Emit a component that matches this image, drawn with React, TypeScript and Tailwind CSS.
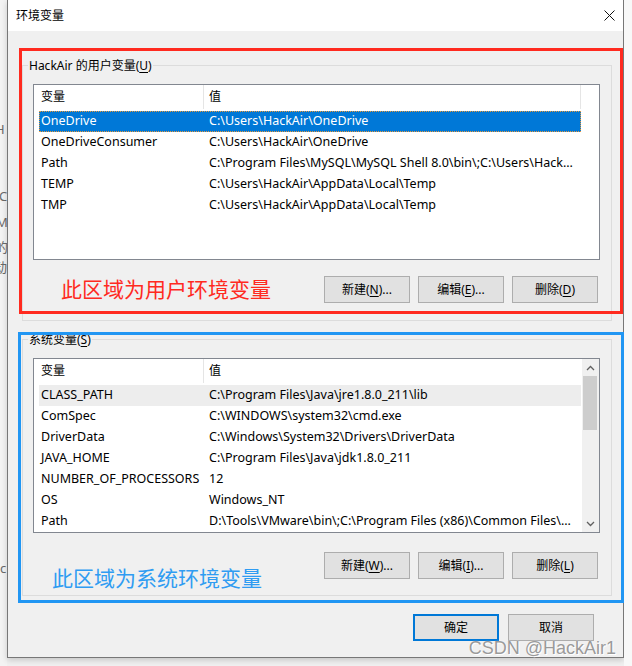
import React from "react";

type Row = { name: string; value: string };

const userRows: Row[] = [
  { name: "OneDrive", value: "C:\\Users\\HackAir\\OneDrive" },
  { name: "OneDriveConsumer", value: "C:\\Users\\HackAir\\OneDrive" },
  { name: "Path", value: "C:\\Program Files\\MySQL\\MySQL Shell 8.0\\bin\\;C:\\Users\\Hack..." },
  { name: "TEMP", value: "C:\\Users\\HackAir\\AppData\\Local\\Temp" },
  { name: "TMP", value: "C:\\Users\\HackAir\\AppData\\Local\\Temp" },
];

const sysRows: Row[] = [
  { name: "CLASS_PATH", value: "C:\\Program Files\\Java\\jre1.8.0_211\\lib" },
  { name: "ComSpec", value: "C:\\WINDOWS\\system32\\cmd.exe" },
  { name: "DriverData", value: "C:\\Windows\\System32\\Drivers\\DriverData" },
  { name: "JAVA_HOME", value: "C:\\Program Files\\Java\\jdk1.8.0_211" },
  { name: "NUMBER_OF_PROCESSORS", value: "12" },
  { name: "OS", value: "Windows_NT" },
  { name: "Path", value: "D:\\Tools\\VMware\\bin\\;C:\\Program Files (x86)\\Common Files\\..." },
];

function U({ children }: { children: React.ReactNode }) {
  return <span className="underline underline-offset-[2px] decoration-1">{children}</span>;
}

function Btn({ children, primary }: { children: React.ReactNode; primary?: boolean }) {
  return (
    <div
      className={
        primary
          ? "w-[86px] h-[27px] flex items-center justify-center bg-[#e1e1e1] border-2 border-[#0078d7] text-[12px] text-black"
          : "w-[86px] h-[27px] flex items-center justify-center bg-[#e1e1e1] border border-[#adadad] text-[12px] text-black"
      }
    >
      {children}
    </div>
  );
}

function Chevron({ up }: { up?: boolean }) {
  return (
    <svg width="9" height="6" viewBox="0 0 9 6">
      <path
        d={up ? "M1 5 L4.5 1.5 L8 5" : "M1 1 L4.5 4.5 L8 1"}
        fill="none"
        stroke="#606060"
        strokeWidth="1.3"
      />
    </svg>
  );
}

function ListBox({
  rows,
  selected,
  hover,
  scroll,
  height,
}: {
  rows: Row[];
  selected?: number;
  hover?: number;
  scroll?: boolean;
  height: string;
}) {
  return (
    <div className={`ml-[10px] w-[567px] ${height} border border-[#828790] bg-white flex`}>
      <div className="flex-1 pl-[5px] flex flex-col overflow-hidden">
        <div className="h-[24px] mb-[2px] flex text-[12px] text-black">
          <div className="w-[165px] shrink-0 pl-[2px] border-r border-[#e5e5e5] flex items-center">变量</div>
          <div
            className={
              scroll
                ? "w-[377px] shrink-0 pl-[5px] flex items-center"
                : "w-[377px] shrink-0 pl-[5px] border-r border-[#e5e5e5] flex items-center"
            }
          >
            值
          </div>
        </div>
        {rows.map((r, i) => {
          const sel = i === selected;
          const hov = i === hover;
          const cls = sel
            ? "w-[542px] h-[21px] shrink-0 flex text-[12.5px] bg-[#0078d7] text-white outline-1 outline-dotted outline-offset-[-1px] outline-[#e8993b]"
            : hov
            ? "w-[542px] h-[21px] shrink-0 flex text-[12.5px] bg-[#ededed] text-black"
            : "w-[542px] h-[21px] shrink-0 flex text-[12.5px] text-black";
          return (
            <div key={i} className={cls}>
              <div className="w-[165px] shrink-0 pl-[2px] flex items-center whitespace-nowrap overflow-hidden">{r.name}</div>
              <div className="w-[377px] shrink-0 pl-[5px] flex items-center whitespace-nowrap overflow-hidden">{r.value}</div>
            </div>
          );
        })}
      </div>
      {scroll && (
        <div className="w-[17px] shrink-0 bg-[#f0f0f0] flex flex-col">
          <div className="h-[17px] flex items-center justify-center">
            <Chevron up />
          </div>
          <div className="ml-[1px] w-[14px] h-[54px] bg-[#cdcdcd]" />
          <div className="flex-1" />
          <div className="h-[17px] flex items-center justify-center">
            <Chevron />
          </div>
        </div>
      )}
    </div>
  );
}

export default function App() {
  return (
    <div className="relative w-[632px] h-[666px] overflow-hidden bg-[#f0f0f0] flex font-['Noto_Sans','Noto_Sans_CJK_SC',sans-serif]">
      {/* background window fragments at left */}
      <div className="w-[7px] shrink-0 flex flex-col overflow-hidden text-[13px] leading-[13px] text-[#6a6a6a] bg-[#f3f3f3]">
        <div className="mt-[123px] -ml-[5px]">H</div>
        <div className="mt-[54px] -ml-[1px]">C</div>
        <div className="mt-[13px] -ml-[4px]">M</div>
        <div className="mt-[11px] -ml-[5px] font-['Noto_Sans_CJK_SC',sans-serif]">的</div>
        <div className="mt-[7px] -ml-[6px] font-['Noto_Sans_CJK_SC',sans-serif]">动</div>
        <div className="mt-[289px] ml-[0px]">c</div>
      </div>

      {/* dialog window */}
      <div className="w-[617px] h-[658px] shrink-0 flex flex-col border-x border-b border-[#777777] bg-[#f0f0f0] shadow-[0_2px_6px_rgba(0,0,0,0.18)]">
        <div className="h-[31px] shrink-0 bg-white flex items-center justify-between pl-[8px] pr-[8px]">
          <span className="text-[12px] text-black">环境变量</span>
          <svg width="11" height="11" viewBox="0 0 11 11">
            <path d="M0.5 0.5 L10.5 10.5 M10.5 0.5 L0.5 10.5" stroke="#111" strokeWidth="1" />
          </svg>
        </div>

        <div className="flex-1 flex flex-col">
          {/* user variables group */}
          <div className="mt-[34px] ml-[14px] w-[590px] border border-[#dcdcdc] flex flex-col pb-[17px]">
            <div className="-mt-[9px] ml-[5px] px-[1px] w-fit h-[17px] leading-[17px] bg-[#f0f0f0] text-[12px] text-black">
              HackAir 的用户变量(<U>U</U>)
            </div>
            <div className="mt-[10px]">
              <ListBox rows={userRows} selected={0} height="h-[176px]" />
            </div>
            <div className="mt-[16px] ml-[301px] flex gap-[8px]">
              <Btn>
                新建(<U>N</U>)...
              </Btn>
              <Btn>
                编辑(<U>E</U>)...
              </Btn>
              <Btn>
                删除(<U>D</U>)
              </Btn>
            </div>
          </div>

          {/* system variables group */}
          <div className="mt-[18px] ml-[14px] w-[590px] border border-[#dcdcdc] flex flex-col pb-[16px]">
            <div className="-mt-[9px] ml-[5px] px-[1px] w-fit h-[17px] leading-[17px] bg-[#f0f0f0] text-[12px] text-black">
              系统变量(<U>S</U>)
            </div>
            <div className="mt-[10px]">
              <ListBox rows={sysRows} hover={0} scroll height="h-[175px]" />
            </div>
            <div className="mt-[19px] ml-[301px] flex gap-[8px]">
              <Btn>
                新建(<U>W</U>)...
              </Btn>
              <Btn>
                编辑(<U>I</U>)...
              </Btn>
              <Btn>
                删除(<U>L</U>)
              </Btn>
            </div>
          </div>

          <div className="mt-[18px] ml-[405px] flex gap-[9px]">
            <Btn primary>确定</Btn>
            <Btn>取消</Btn>
          </div>
        </div>
      </div>

      <div className="flex-1 bg-[#f8f8f8]" />

      {/* annotation overlays */}
      <div className="absolute left-[19px] top-[48px] w-[604px] h-[266px] border-[3px] border-[#ff2a1f] flex items-end pl-[39px] pb-[11px] pointer-events-none">
        <span className="text-[21px] leading-[24px] text-[#ff2a1f] font-['Noto_Sans_CJK_SC',sans-serif]">此区域为用户环境变量</span>
      </div>
      <div className="absolute left-[18px] top-[332px] w-[606px] h-[271px] border-[3px] border-[#2196f3] flex items-end pl-[31px] pb-[11px] pointer-events-none">
        <span className="text-[21px] leading-[24px] text-[#2f9cf2] font-['Noto_Sans_CJK_SC',sans-serif]">此区域为系统环境变量</span>
      </div>

      {/* watermark */}
      <div className="absolute right-[16px] bottom-[9px] text-[18px] leading-[18px] text-[#9a9a9a] font-['Liberation_Sans',Arial,sans-serif] [text-shadow:0_0_1px_#ffffff,1px_1px_0_#ffffff] pointer-events-none">
        CSDN @HackAir1
      </div>
    </div>
  );
}
